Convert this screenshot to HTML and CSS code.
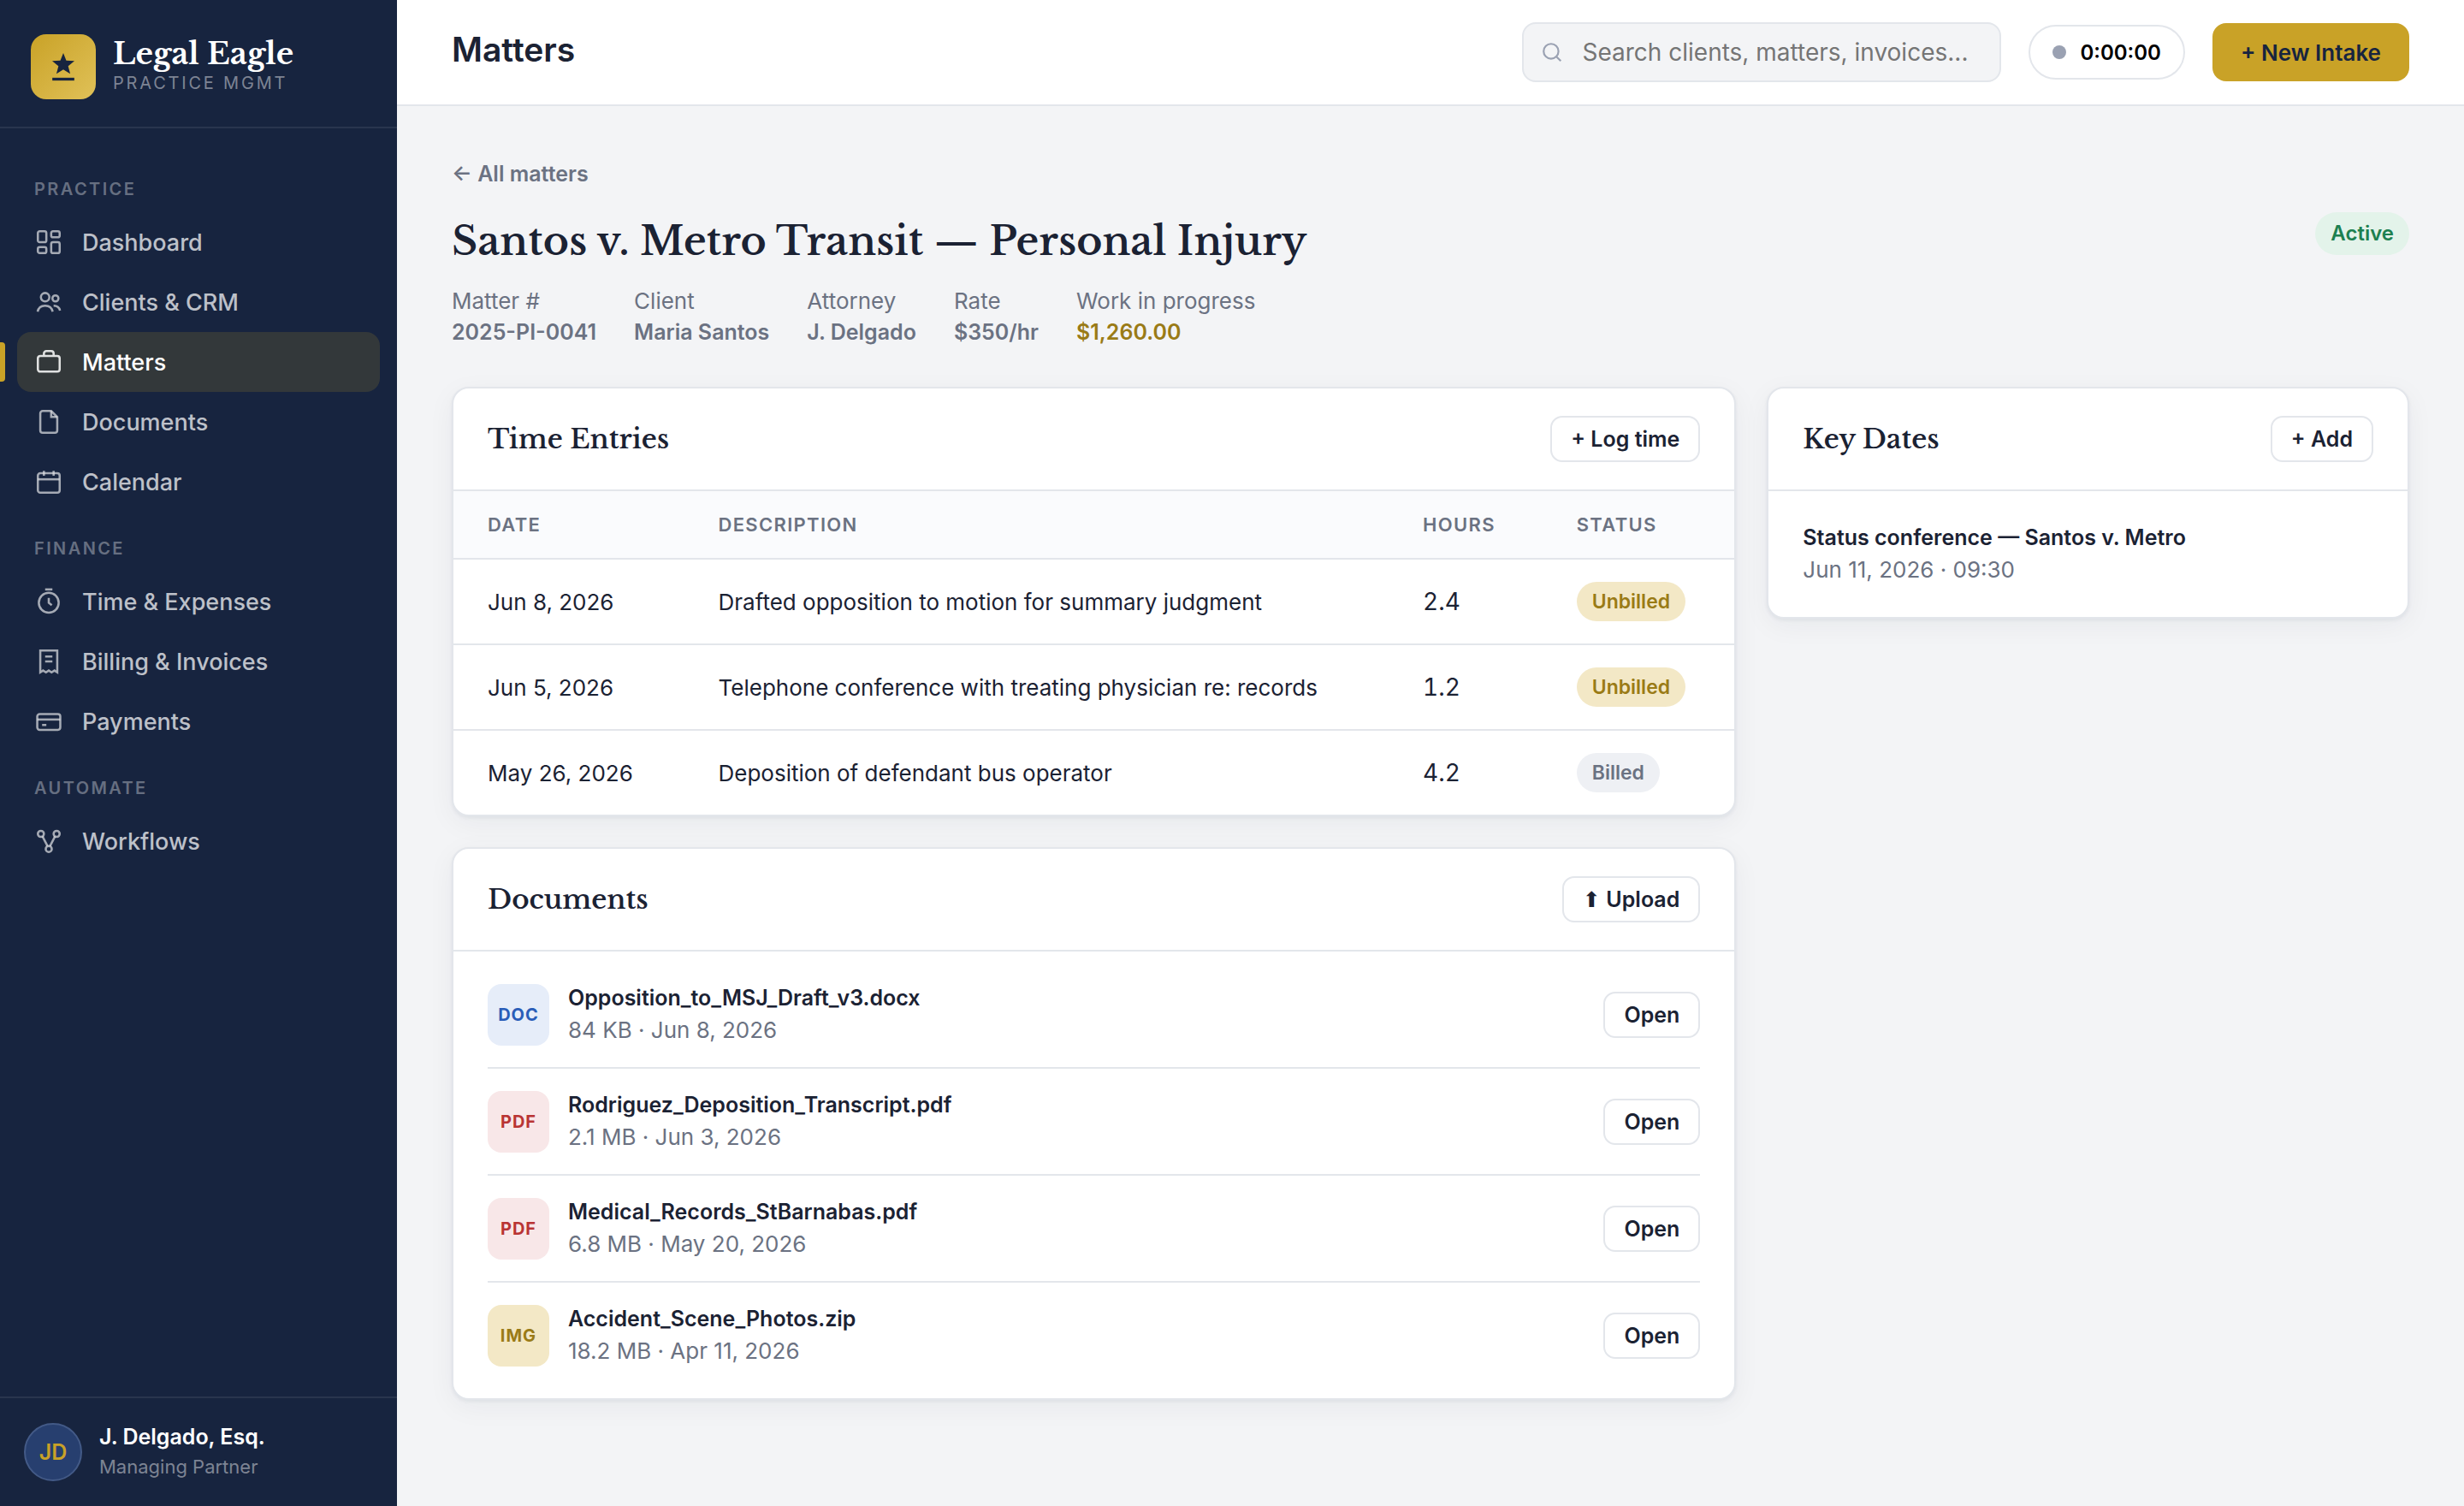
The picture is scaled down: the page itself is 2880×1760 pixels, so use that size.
FILE: index.html
```html
<!DOCTYPE html>
<html lang="en">
<head>
    <meta charset="UTF-8">
    <meta name="viewport" content="width=device-width, initial-scale=1.0">
    <title>Legal Eagle - Matters</title>
    <link rel="stylesheet" href="styles.css">
</head>
<body>
    <div class="app">
        <aside class="sidebar">
            <div class="brand">
                <div class="brand-logo">
                    <svg viewBox="0 0 24 24" width="44" height="44">
                        <path d="M12 3.3l1.9 4.7 5.2.3-4 3.3 1.3 4.9-4.4-2.7-4.4 2.7 1.3-4.9-4-3.3 5.2-.3z" fill="#17243f"/>
                        <path d="M5 19.9h14" stroke="#17243f" stroke-width="1.8"/>
                    </svg>
                </div>
                <div>
                    <div class="brand-name">Legal Eagle</div>
                    <div class="brand-sub">PRACTICE MGMT</div>
                </div>
            </div>

            <nav class="nav">
                <div class="nav-label">PRACTICE</div>
                <a href="#" class="nav-item">
                    <svg class="icon" viewBox="0 0 24 24"><rect x="3" y="3" width="7" height="9" rx="1.5"/><rect x="14" y="3" width="7" height="5" rx="1.5"/><rect x="14" y="12" width="7" height="9" rx="1.5"/><rect x="3" y="16" width="7" height="5" rx="1.5"/></svg>
                    Dashboard
                </a>
                <a href="#" class="nav-item">
                    <svg class="icon" viewBox="0 0 24 24"><circle cx="9" cy="8" r="3.5"/><path d="M2.8 20c.6-3.2 3-5 6.2-5s5.6 1.8 6.2 5"/><circle cx="17.5" cy="9" r="2.5"/><path d="M16 15c2.8 0 4.7 1.3 5.3 4"/></svg>
                    Clients &amp; CRM
                </a>
                <a href="#" class="nav-item active">
                    <svg class="icon" viewBox="0 0 24 24"><rect x="3" y="7" width="18" height="13" rx="2"/><path d="M8 7V5a2 2 0 0 1 2-2h4a2 2 0 0 1 2 2v2"/></svg>
                    Matters
                </a>
                <a href="#" class="nav-item">
                    <svg class="icon" viewBox="0 0 24 24"><path d="M14 3H7a2 2 0 0 0-2 2v14a2 2 0 0 0 2 2h10a2 2 0 0 0 2-2V8z"/><path d="M14 3v5h5"/></svg>
                    Documents
                </a>
                <a href="#" class="nav-item">
                    <svg class="icon" viewBox="0 0 24 24"><rect x="3" y="5" width="18" height="16" rx="2"/><path d="M3 10h18"/><path d="M8 3v4M16 3v4"/></svg>
                    Calendar
                </a>
                <div class="nav-label">FINANCE</div>
                <a href="#" class="nav-item">
                    <svg class="icon" viewBox="0 0 24 24"><circle cx="12" cy="13" r="8.2"/><path d="M12 9v4l2.5 2"/><path d="M9 2h6"/></svg>
                    Time &amp; Expenses
                </a>
                <a href="#" class="nav-item">
                    <svg class="icon" viewBox="0 0 24 24"><path d="M5 3v18l2.3-1.5L9.7 21l2.3-1.5 2.3 1.5 2.4-1.5L19 21V3z"/><path d="M9 8h6M9 12h6"/></svg>
                    Billing &amp; Invoices
                </a>
                <a href="#" class="nav-item">
                    <svg class="icon" viewBox="0 0 24 24"><rect x="2.5" y="6" width="19" height="13" rx="2"/><path d="M2.5 10.5h19"/><path d="M6.5 15h3.5"/></svg>
                    Payments
                </a>
                <div class="nav-label">AUTOMATE</div>
                <a href="#" class="nav-item">
                    <svg class="icon" viewBox="0 0 24 24"><circle cx="5.5" cy="6" r="2.5"/><circle cx="18.5" cy="6" r="2.5"/><circle cx="12" cy="18.5" r="2.5"/><path d="M6.8 8l4.2 8.2M17.2 8L13 16.2"/></svg>
                    Workflows
                </a>
            </nav>

            <div class="user">
                <div class="avatar">JD</div>
                <div>
                    <div class="user-name">J. Delgado, Esq.</div>
                    <div class="user-role">Managing Partner</div>
                </div>
            </div>
        </aside>

        <div class="main">
            <header class="topbar">
                <div class="topbar-title">Matters</div>
                <label class="search">
                    <svg class="search-icon" viewBox="0 0 24 24"><circle cx="11" cy="11" r="8"/><path d="M17 17l4.5 4.5"/></svg>
                    <input type="text" placeholder="Search clients, matters, invoices..." aria-label="Search">
                </label>
                <button class="timer"><span class="timer-dot"></span>0:00:00</button>
                <button class="btn-primary">+ New Intake</button>
            </header>

            <main class="content">
                <a href="#" class="back">← All matters</a>

                <div class="matter-head">
                    <div>
                        <h1>Santos v. Metro Transit — Personal Injury</h1>
                        <div class="matter-meta">
                            <div>Matter #<strong>2025-PI-0041</strong></div>
                            <div>Client<strong>Maria Santos</strong></div>
                            <div>Attorney<strong>J. Delgado</strong></div>
                            <div>Rate<strong>$350/hr</strong></div>
                            <div>Work in progress<strong class="gold">$1,260.00</strong></div>
                        </div>
                    </div>
                    <span class="badge badge-active">Active</span>
                </div>

                <div class="grid">
                    <div class="column">
                        <section class="card">
                            <div class="card-head">
                                <h2>Time Entries</h2>
                                <button class="btn">+ Log time</button>
                            </div>
                            <table>
                                <thead>
                                    <tr>
                                        <th class="col-date">DATE</th>
                                        <th>DESCRIPTION</th>
                                        <th class="col-hours">HOURS</th>
                                        <th class="col-status">STATUS</th>
                                    </tr>
                                </thead>
                                <tbody>
                                    <tr>
                                        <td>Jun 8, 2026</td>
                                        <td>Drafted opposition to motion for summary judgment</td>
                                        <td class="hours">2.4</td>
                                        <td><span class="badge badge-unbilled">Unbilled</span></td>
                                    </tr>
                                    <tr>
                                        <td>Jun 5, 2026</td>
                                        <td>Telephone conference with treating physician re: records</td>
                                        <td class="hours">1.2</td>
                                        <td><span class="badge badge-unbilled">Unbilled</span></td>
                                    </tr>
                                    <tr>
                                        <td>May 26, 2026</td>
                                        <td>Deposition of defendant bus operator</td>
                                        <td class="hours">4.2</td>
                                        <td><span class="badge badge-billed">Billed</span></td>
                                    </tr>
                                </tbody>
                            </table>
                        </section>

                        <section class="card">
                            <div class="card-head">
                                <h2>Documents</h2>
                                <button class="btn"><span class="arrow">⬆</span> Upload</button>
                            </div>
                            <div class="list">
                                <div class="list-item">
                                    <div class="file-type doc">DOC</div>
                                    <div class="list-text">
                                        <div class="list-title">Opposition_to_MSJ_Draft_v3.docx</div>
                                        <div class="list-sub">84 KB · Jun 8, 2026</div>
                                    </div>
                                    <button class="btn">Open</button>
                                </div>
                                <div class="list-item">
                                    <div class="file-type pdf">PDF</div>
                                    <div class="list-text">
                                        <div class="list-title">Rodriguez_Deposition_Transcript.pdf</div>
                                        <div class="list-sub">2.1 MB · Jun 3, 2026</div>
                                    </div>
                                    <button class="btn">Open</button>
                                </div>
                                <div class="list-item">
                                    <div class="file-type pdf">PDF</div>
                                    <div class="list-text">
                                        <div class="list-title">Medical_Records_StBarnabas.pdf</div>
                                        <div class="list-sub">6.8 MB · May 20, 2026</div>
                                    </div>
                                    <button class="btn">Open</button>
                                </div>
                                <div class="list-item">
                                    <div class="file-type img">IMG</div>
                                    <div class="list-text">
                                        <div class="list-title">Accident_Scene_Photos.zip</div>
                                        <div class="list-sub">18.2 MB · Apr 11, 2026</div>
                                    </div>
                                    <button class="btn">Open</button>
                                </div>
                            </div>
                        </section>
                    </div>

                    <section class="card">
                        <div class="card-head">
                            <h2>Key Dates</h2>
                            <button class="btn">+ Add</button>
                        </div>
                        <div class="list">
                            <div class="list-item">
                                <div class="list-text">
                                    <div class="list-title">Status conference — Santos v. Metro</div>
                                    <div class="list-sub">Jun 11, 2026 · 09:30</div>
                                </div>
                            </div>
                        </div>
                    </section>
                </div>
            </main>
        </div>
    </div>
</body>
</html>
```
FILE: styles.css
```css
* {
    box-sizing: border-box;
}

body {
    margin: 0;
    font-family: Inter, "Liberation Sans", sans-serif;
    font-size: 26px;
    color: #1b2233;
    background: #f3f4f6;
}

button,
input {
    font-family: inherit;
}

a {
    text-decoration: none;
}

.app {
    display: flex;
    min-height: 100vh;
}

/* Sidebar */
.sidebar {
    display: flex;
    flex-direction: column;
    flex: none;
    width: 464px;
    background: #17243f;
}

.brand {
    display: flex;
    align-items: center;
    gap: 20px;
    padding: 40px 36px 32px;
    border-bottom: 2px solid rgba(255, 255, 255, 0.08);
}

.brand-logo {
    display: flex;
    align-items: center;
    justify-content: center;
    width: 76px;
    height: 76px;
    border-radius: 18px;
    background: linear-gradient(135deg, #c9a227, #e0c158);
}

.brand-name {
    font-family: "Libre Baskerville", "Liberation Serif", serif;
    font-size: 35px;
    font-weight: 700;
    line-height: 38px;
    color: #fff;
}

.brand-sub {
    font-size: 20px;
    line-height: 30px;
    letter-spacing: 0.14em;
    color: rgba(255, 255, 255, 0.45);
}

.nav {
    flex: 1;
    padding: 28px 20px;
}

.nav-label {
    height: 70px;
    padding: 28px 20px 12px;
    font-size: 20px;
    font-weight: 600;
    line-height: 30px;
    letter-spacing: 0.12em;
    color: rgba(255, 255, 255, 0.35);
}

.nav-item {
    position: relative;
    display: flex;
    align-items: center;
    gap: 22px;
    height: 70px;
    padding: 0 20px;
    border-radius: 16px;
    font-size: 27px;
    font-weight: 500;
    color: rgba(255, 255, 255, 0.72);
}

.nav-item.active {
    color: #fff;
    background: rgba(201, 162, 39, 0.16);
}

.nav-item.active::before {
    content: "";
    position: absolute;
    left: -20px;
    top: 12px;
    bottom: 12px;
    width: 6px;
    border-radius: 0 4px 4px 0;
    background: #c9a227;
}

.icon {
    width: 34px;
    height: 34px;
    fill: none;
    stroke: currentColor;
    stroke-width: 1.8;
    opacity: 0.85;
}

.user {
    display: flex;
    align-items: center;
    gap: 20px;
    padding: 28px;
    border-top: 2px solid rgba(255, 255, 255, 0.08);
}

.avatar {
    display: flex;
    align-items: center;
    justify-content: center;
    width: 68px;
    height: 68px;
    border: 2px solid #435a87;
    border-radius: 50%;
    font-size: 25px;
    font-weight: 600;
    color: #c9a227;
    background: #273f6f;
}

.user-name {
    font-size: 25px;
    font-weight: 600;
    line-height: 34px;
    color: #fff;
}

.user-role {
    font-size: 22px;
    line-height: 36px;
    color: rgba(255, 255, 255, 0.45);
}

/* Top bar */
.main {
    flex: 1;
    min-width: 0;
}

.topbar {
    display: flex;
    align-items: center;
    gap: 32px;
    height: 124px;
    padding: 0 64px;
    border-bottom: 2px solid #e3e6eb;
    background: #fff;
}

.topbar-title {
    flex: 1;
    padding-bottom: 8px;
    font-size: 39px;
    font-weight: 600;
}

.search {
    display: flex;
    align-items: center;
    gap: 22px;
    width: 560px;
    height: 70px;
    padding: 0 20px;
    border: 2px solid #e3e6eb;
    border-radius: 16px;
    background: #f3f4f6;
}

.search-icon {
    flex: none;
    width: 26px;
    height: 26px;
    fill: none;
    stroke: #9aa1b2;
    stroke-width: 2;
}

.search input {
    flex: 1;
    min-width: 0;
    padding: 0;
    border: 0;
    outline: 0;
    font-size: 28px;
    background: transparent;
}

.search input::placeholder {
    color: #757575;
}

.timer {
    display: flex;
    align-items: center;
    gap: 16px;
    height: 64px;
    padding: 0 26px;
    border: 2px solid #e3e6eb;
    border-radius: 32px;
    font-size: 24px;
    font-weight: 600;
    color: #000;
    background: #fff;
}

.timer-dot {
    width: 16px;
    height: 16px;
    border-radius: 50%;
    background: #9aa1b2;
}

.btn-primary {
    height: 68px;
    padding: 0 33px;
    border: 0;
    border-radius: 16px;
    font-size: 26px;
    font-weight: 600;
    color: #17243f;
    background: #c9a227;
}

/* Matter header */
.content {
    padding: 60px 64px;
}

.back {
    display: block;
    font-size: 25px;
    font-weight: 600;
    line-height: 38px;
    color: #6b7282;
}

.matter-head {
    display: flex;
    align-items: flex-start;
    justify-content: space-between;
    margin: 26px 0 46px;
}

h1,
h2 {
    margin: 0;
    font-family: "Libre Baskerville", "Liberation Serif", serif;
    font-weight: 600;
}

h1 {
    font-size: 46px;
    line-height: 68px;
}

.matter-meta {
    display: flex;
    gap: 44px;
    margin-top: 18px;
    line-height: 36px;
    color: #6b7282;
}

.matter-meta strong {
    display: block;
    font-size: 25px;
    font-weight: 600;
}

.matter-meta .gold {
    color: #9a7b16;
}

.badge {
    display: inline-block;
    padding: 0 18px;
    border-radius: 25px;
    font-size: 23px;
    font-weight: 600;
    line-height: 46px;
    vertical-align: middle;
}

.badge-active {
    font-size: 24px;
    line-height: 50px;
    color: #1d8050;
    background: #e3f3ea;
}

.badge-unbilled {
    color: #9a7b16;
    background: #f3e8c6;
}

.badge-billed {
    color: #6b7282;
    background: #eef0f4;
}

/* Cards */
.grid {
    display: grid;
    grid-template-columns: 2fr 1fr;
    align-items: start;
    gap: 36px;
}

.column {
    display: grid;
    gap: 36px;
    min-width: 0;
}

.card {
    overflow: hidden;
    border: 2px solid #e3e6eb;
    border-radius: 20px;
    background: #fff;
    box-shadow: 0 2px 4px rgba(23, 36, 63, 0.06), 0 8px 32px rgba(23, 36, 63, 0.05);
}

.card-head {
    display: flex;
    align-items: center;
    justify-content: space-between;
    padding: 32px 40px;
    border-bottom: 2px solid #e3e6eb;
}

h2 {
    font-size: 31px;
    line-height: 48px;
}

.btn {
    height: 54px;
    padding: 0 22px;
    border: 2px solid #e3e6eb;
    border-radius: 14px;
    font-size: 25px;
    font-weight: 600;
    color: #1b2233;
    background: #fff;
}

.arrow {
    font-family: "DejaVu Sans", sans-serif;
    font-weight: 400;
}

table {
    width: 100%;
    border-spacing: 0;
}

th {
    height: 80px;
    padding: 0 40px;
    border-bottom: 2px solid #e3e6eb;
    font-size: 22px;
    font-weight: 600;
    letter-spacing: 0.06em;
    text-align: left;
    color: #6b7282;
    background: #fafbfd;
}

.col-date {
    width: 18%;
}

.col-hours {
    width: 12%;
}

.col-status {
    width: 15%;
}

td {
    height: 100px;
    padding: 0 40px;
    border-bottom: 2px solid #e3e6eb;
}

tbody tr:last-child td {
    height: 98px;
    border-bottom: 0;
}

.hours {
    font-size: 28px;
    font-variant-numeric: tabular-nums;
}

.list {
    padding: 12px 40px;
}

.list-item {
    display: flex;
    align-items: center;
    gap: 22px;
    padding: 24px 0;
    border-bottom: 2px solid #e3e6eb;
}

.list-item:last-child {
    border-bottom: 0;
}

.list-text {
    flex: 1;
}

.list-title {
    font-size: 25px;
    font-weight: 600;
    line-height: 36px;
}

.list-sub {
    line-height: 39px;
    color: #6b7282;
}

.file-type {
    display: flex;
    align-items: center;
    justify-content: center;
    width: 72px;
    height: 72px;
    border-radius: 16px;
    font-size: 20px;
    font-weight: 700;
    letter-spacing: 1px;
}

.file-type.doc {
    color: #2a5db8;
    background: #e6edf9;
}

.file-type.pdf {
    color: #b93434;
    background: #f8e7e8;
}

.file-type.img {
    color: #9a7b16;
    background: #f3e8c6;
}
```
